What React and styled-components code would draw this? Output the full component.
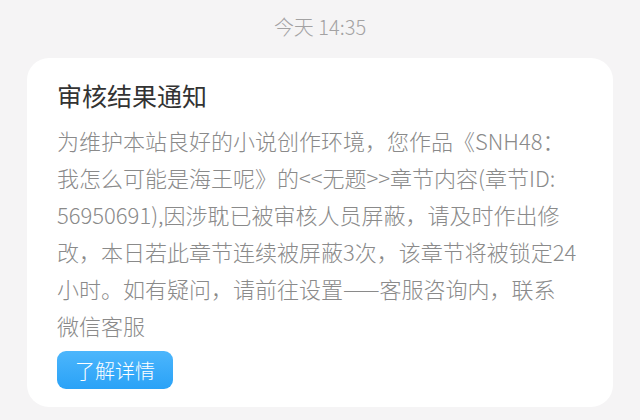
import React from "react";
import styled, { createGlobalStyle } from "styled-components";

const GlobalStyle = createGlobalStyle`
  html, body {
    margin: 0;
    padding: 0;
    background: #f5f4f5;
  }
  body {
    font-family: "Noto Sans CJK SC", "Noto Sans", sans-serif;
    -webkit-font-smoothing: antialiased;
  }
`;

const Page = styled.div`
  width: 640px;
  height: 420px;
  display: flex;
  flex-direction: column;
  align-items: center;
  background: #f5f4f5;
  overflow: hidden;
`;

const Timestamp = styled.div`
  margin-top: 12px;
  height: 30px;
  line-height: 30px;
  font-size: 20px;
  color: #a3a2a3;
  font-weight: 300;
`;

const Card = styled.div`
  margin-top: 16px;
  width: 586px;
  box-sizing: border-box;
  padding: 19px 30px 18px;
  background: #ffffff;
  border-radius: 22px;
  display: flex;
  flex-direction: column;
  align-items: flex-start;
`;

const Title = styled.div`
  font-size: 25px;
  line-height: 36px;
  color: #333333;
  font-weight: 400;
`;

const Body = styled.p`
  margin: 9px 0 0;
  font-size: 22px;
  line-height: 37px;
  color: #8a8a8a;
  font-weight: 300;
  white-space: nowrap;
`;

const DetailButton = styled.button`
  margin-top: 7px;
  width: 116px;
  height: 38px;
  border: none;
  border-radius: 9px;
  background: linear-gradient(180deg, #4cb6fc 0%, #2aa2f7 100%);
  color: #ffffff;
  font-family: inherit;
  font-size: 20px;
  font-weight: 300;
  padding: 0;
  cursor: pointer;
`;

const lines = [
  "为维护本站良好的小说创作环境，您作品《SNH48：",
  "我怎么可能是海王呢》的<<无题>>章节内容(章节ID:",
  "56950691),因涉耽已被审核人员屏蔽，请及时作出修",
  "改，本日若此章节连续被屏蔽3次，该章节将被锁定24",
  "小时。如有疑问，请前往设置——客服咨询内，联系",
  "微信客服",
];

export default function App() {
  return (
    <Page>
      <GlobalStyle />
      <Timestamp>今天 14:35</Timestamp>
      <Card>
        <Title>审核结果通知</Title>
        <Body>
          {lines.map((l, i) => (
            <React.Fragment key={i}>
              {l}
              {i < lines.length - 1 && <br />}
            </React.Fragment>
          ))}
        </Body>
        <DetailButton>了解详情</DetailButton>
      </Card>
    </Page>
  );
}
